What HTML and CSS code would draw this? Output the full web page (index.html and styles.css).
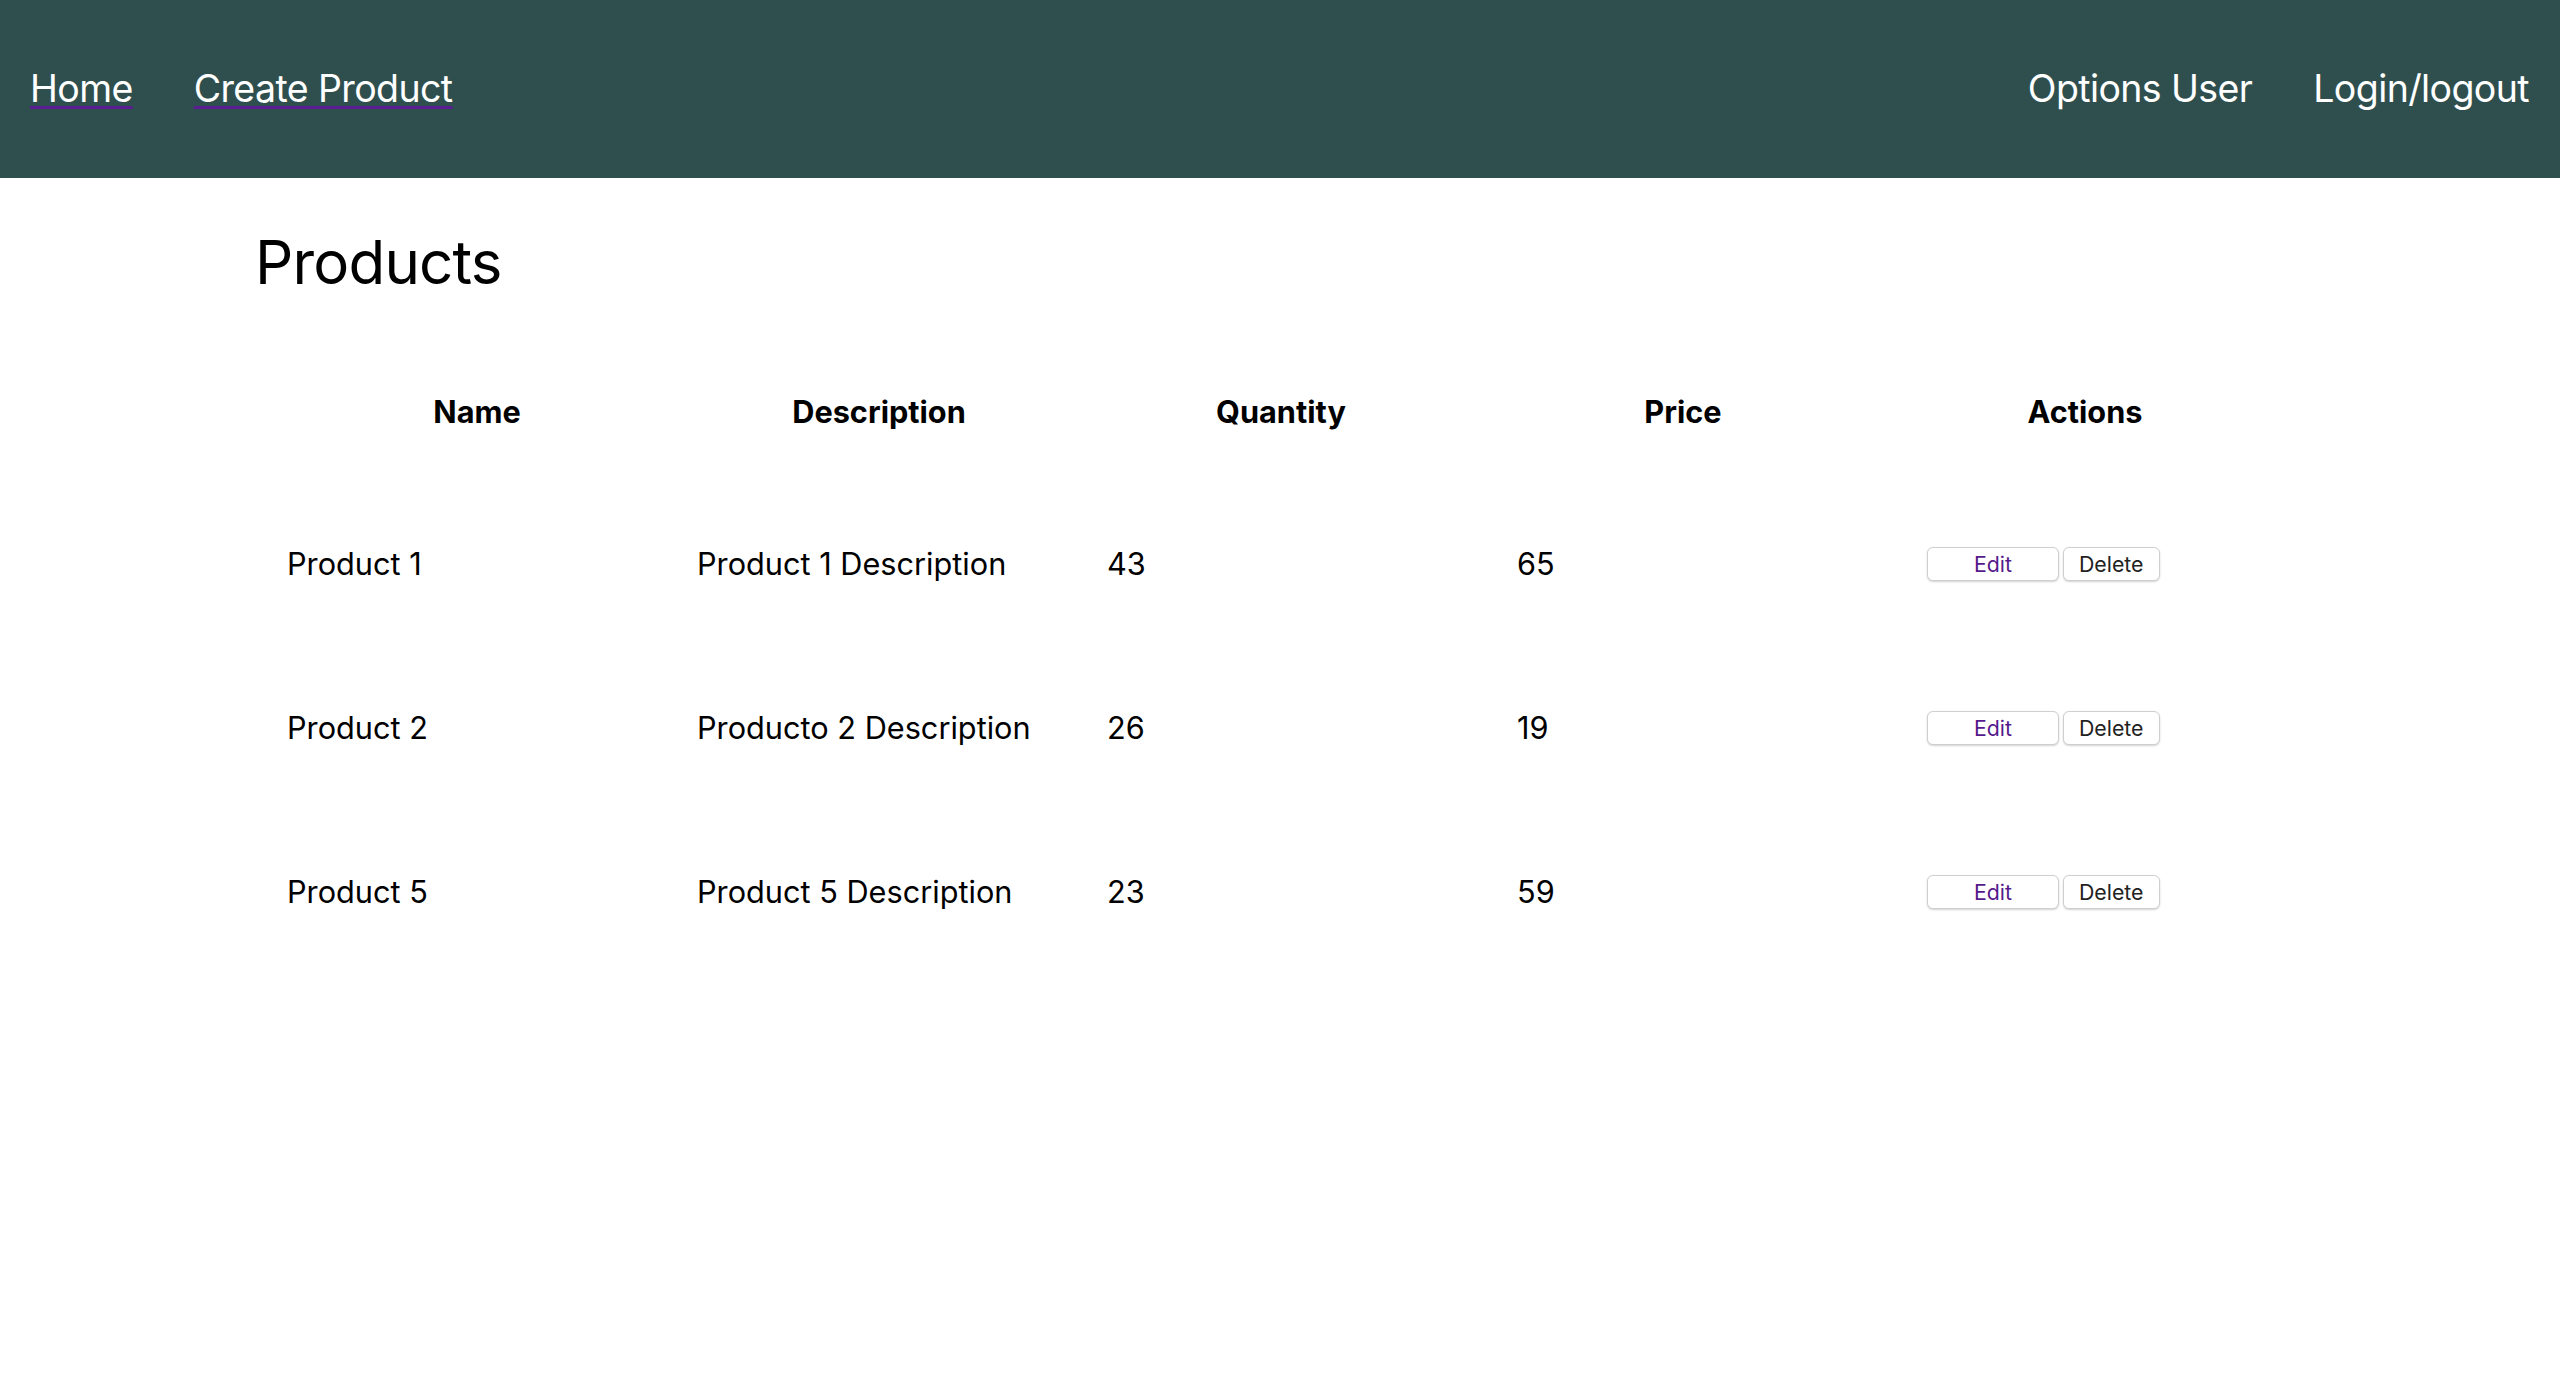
FILE: index.html
```html
<!DOCTYPE html>
<html lang="en">
<head>
<meta charset="utf-8">
<title>Products</title>
<link rel="stylesheet" href="styles.css">
</head>
<body>
<nav class="navbar">
  <div class="nav-group">
    <a class="nav-link visited" href="#">Home</a>
    <a class="nav-link visited" href="#">Create Product</a>
  </div>
  <div class="nav-group">
    <span class="nav-link">Options User</span>
    <span class="nav-link">Login/logout</span>
  </div>
</nav>
<main class="content">
  <h1 class="title">Products</h1>
  <div class="table">
    <div class="head-row">
      <div class="th">Name</div>
      <div class="th">Description</div>
      <div class="th">Quantity</div>
      <div class="th">Price</div>
      <div class="th">Actions</div>
    </div>
    <div class="row">
      <div class="td">Product 1</div>
      <div class="td">Product 1 Description</div>
      <div class="td">43</div>
      <div class="td">65</div>
      <div class="td actions"><button class="btn btn-edit">Edit</button><button class="btn">Delete</button></div>
    </div>
    <div class="row">
      <div class="td">Product 2</div>
      <div class="td">Producto 2 Description</div>
      <div class="td">26</div>
      <div class="td">19</div>
      <div class="td actions"><button class="btn btn-edit">Edit</button><button class="btn">Delete</button></div>
    </div>
    <div class="row">
      <div class="td">Product 5</div>
      <div class="td">Product 5 Description</div>
      <div class="td">23</div>
      <div class="td">59</div>
      <div class="td actions"><button class="btn btn-edit">Edit</button><button class="btn">Delete</button></div>
    </div>
  </div>
</main>
</body>
</html>
```
FILE: styles.css
```css
* { box-sizing: border-box; }
html, body {
  margin: 0;
  padding: 0;
  background: #ffffff;
  font-family: Inter, "Noto Sans", sans-serif;
  color: #000;
}
.navbar {
  height: 178px;
  background: #2f4f4f;
  display: flex;
  align-items: center;
  justify-content: space-between;
  padding: 0 31px 0 30px;
}
.nav-group {
  display: flex;
  gap: 61px;
  align-items: center;
}
.nav-link {
  color: #ffffff;
  font-size: 37.5px;
  letter-spacing: -0.6px;
  line-height: 1.21;
  text-decoration: none;
}
.nav-link.visited {
  text-decoration-line: underline;
  text-decoration-color: #5a1d92;
  text-decoration-thickness: 3px;
  text-underline-offset: 4px;
}
.content {
  padding: 0 0 0 255px;
}
.title {
  margin: 48px 0 0 0;
  font-size: 60px;
  font-weight: 400;
  letter-spacing: -0.8px;
  line-height: 1.21;
}
.table {
  margin: 43px 0 0 21px;
}
.head-row {
  display: grid;
  grid-template-columns: repeat(5, 402px);
  height: 140px;
  align-items: center;
}
.th {
  text-align: center;
  font-weight: 700;
  font-size: 30.7px;
  line-height: 1.21;
}
.row {
  display: grid;
  grid-template-columns: repeat(5, 410px);
  height: 164px;
  align-items: center;
  margin-left: 1px;
}
.td {
  padding-left: 10px;
  font-size: 30.7px;
  line-height: 1.21;
}
.actions {
  display: flex;
  gap: 4px;
  align-items: center;
  padding-top: 1px;
}
.btn {
  height: 34px;
  padding: 0 15px;
  border: 1px solid #cfcfcf;
  border-radius: 6px;
  background: #ffffff;
  box-shadow: 0 1px 2px rgba(0, 0, 0, 0.18);
  font-family: Inter, "Noto Sans", sans-serif;
  font-size: 21.3px;
  color: #222222;
}
.btn-edit {
  width: 132px;
  color: #551a8b;
}
```
